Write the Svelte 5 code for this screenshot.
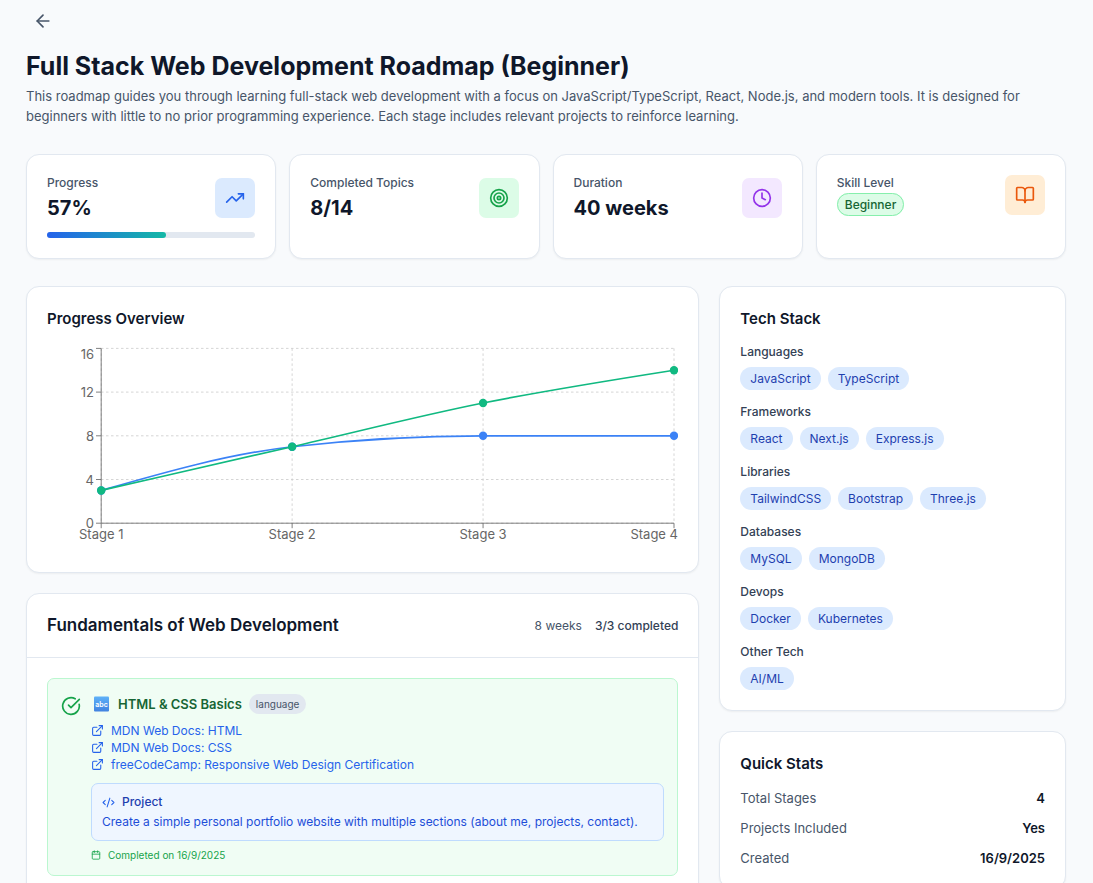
<script>
  const icons = {
    back: ['m12 19-7-7 7-7', 'M19 12H5'],
    trend: ['M16 7h6v6', 'm22 7-8.5 8.5-5-5L2 17'],
    target: [
      'M12 2a10 10 0 1 0 0 20a10 10 0 1 0 0-20',
      'M12 6a6 6 0 1 0 0 12a6 6 0 1 0 0-12',
      'M12 10a2 2 0 1 0 0 4a2 2 0 1 0 0-4'
    ],
    clock: ['M12 2a10 10 0 1 0 0 20a10 10 0 1 0 0-20', 'M12 6v6l4 2'],
    book: [
      'M12 7v14',
      'M3 18a1 1 0 0 1-1-1V4a1 1 0 0 1 1-1h5a4 4 0 0 1 4 4 4 4 0 0 1 4-4h5a1 1 0 0 1 1 1v13a1 1 0 0 1-1 1h-6a3 3 0 0 0-3 3 3 3 0 0 0-3-3z'
    ],
    check: ['M21.801 10A10 10 0 1 1 17 3.335', 'm9 11 3 3L22 4'],
    external: [
      'M15 3h6v6',
      'M10 14 21 3',
      'M18 13v6a2 2 0 0 1-2 2H5a2 2 0 0 1-2-2V8a2 2 0 0 1 2-2h6'
    ],
    code: ['m18 16 4-4-4-4', 'm6 8-4 4 4 4', 'm14.5 4-5 16'],
    calendar: [
      'M8 2v4',
      'M16 2v4',
      'M5 4h14a2 2 0 0 1 2 2v14a2 2 0 0 1-2 2H5a2 2 0 0 1-2-2V6a2 2 0 0 1 2-2z',
      'M3 10h18'
    ]
  };

  const stats = [
    { label: 'Progress', value: '57%', icon: 'trend', tone: 'blue', percent: 57 },
    { label: 'Completed Topics', value: '8/14', icon: 'target', tone: 'green' },
    { label: 'Duration', value: '40 weeks', icon: 'clock', tone: 'purple' },
    { label: 'Skill Level', badge: 'Beginner', icon: 'book', tone: 'orange' }
  ];

  const techStack = [
    { name: 'Languages', items: ['JavaScript', 'TypeScript'] },
    { name: 'Frameworks', items: ['React', 'Next.js', 'Express.js'] },
    { name: 'Libraries', items: ['TailwindCSS', 'Bootstrap', 'Three.js'] },
    { name: 'Databases', items: ['MySQL', 'MongoDB'] },
    { name: 'Devops', items: ['Docker', 'Kubernetes'] },
    { name: 'Other Tech', items: ['AI/ML'] }
  ];

  const quickStats = [
    ['Total Stages', '4'],
    ['Projects Included', 'Yes'],
    ['Created', '16/9/2025']
  ];

  const links = [
    'MDN Web Docs: HTML',
    'MDN Web Docs: CSS',
    'freeCodeCamp: Responsive Web Design Certification'
  ];

  // Chart geometry
  const stages = ['Stage 1', 'Stage 2', 'Stage 3', 'Stage 4'];
  const ticks = [0, 4, 8, 12, 16];
  const series = [
    { color: '#3b82f6', values: [3, 7, 8, 8] },
    { color: '#10b981', values: [3, 7, 11, 14] }
  ];
  const chartHeight = 209;
  const left = 54;
  const top = 5.4;
  const bottom = 180.2;

  let chartWidth = $state(631);
  let right = $derived(chartWidth - 4);
  const x = (i) => left + 0.2 + (i * (right - left - 0.2)) / (stages.length - 1);
  const y = (v) => bottom - (v * (bottom - top)) / 16;

  // Monotone cubic interpolation through evenly spaced points
  function curve(values) {
    const px = values.map((_, i) => x(i));
    const py = values.map(y);
    const n = px.length;
    const slope = (i) => (py[i + 1] - py[i]) / (px[i + 1] - px[i]);
    const m = [];
    for (let i = 1; i < n - 1; i++) {
      const a = slope(i - 1);
      const b = slope(i);
      m[i] = (Math.sign(a) + Math.sign(b)) * Math.min(Math.abs(a), Math.abs(b), 0.25 * Math.abs(a + b)) || 0;
    }
    m[0] = (3 * slope(0) - m[1]) / 2;
    m[n - 1] = (3 * slope(n - 2) - m[n - 2]) / 2;
    let d = `M${px[0]},${py[0]}`;
    for (let i = 0; i < n - 1; i++) {
      const h = (px[i + 1] - px[i]) / 3;
      d += `C${px[i] + h},${py[i] + h * m[i]},${px[i + 1] - h},${py[i + 1] - h * m[i + 1]},${px[i + 1]},${py[i + 1]}`;
    }
    return d;
  }
</script>

{#snippet icon(name, size)}
  <svg class="icon" width={size} height={size} viewBox="0 0 24 24" aria-hidden="true">
    {#each icons[name] as d}<path {d} />{/each}
  </svg>
{/snippet}

<main class="page">
  <button class="back" type="button" aria-label="Back">{@render icon('back', 20)}</button>

  <header class="intro">
    <h1>Full Stack Web Development Roadmap (Beginner)</h1>
    <p>
      This roadmap guides you through learning full-stack web development with a focus on
      JavaScript/TypeScript, React, Node.js, and modern tools. It is designed for beginners with
      little to no prior programming experience. Each stage includes relevant projects to reinforce
      learning.
    </p>
  </header>

  <section class="stats">
    {#each stats as stat}
      <article class="card padded">
        <div class="stat-row">
          <div>
            <p class="stat-label">{stat.label}</p>
            {#if stat.badge}
              <p class="badge-line"><span class="badge">{stat.badge}</span></p>
            {:else}
              <p class="stat-value">{stat.value}</p>
            {/if}
          </div>
          <span class="tile {stat.tone}">{@render icon(stat.icon, 20)}</span>
        </div>
        {#if stat.percent}
          <div class="track"><div class="fill" style="width: {stat.percent}%"></div></div>
        {/if}
      </article>
    {/each}
  </section>

  <div class="columns">
    <div class="column">
      <section class="card padded">
        <h2>Progress Overview</h2>
        <div class="chart" bind:clientWidth={chartWidth}>
          <svg width={chartWidth} height={chartHeight} role="img" aria-label="Progress Overview">
            <g class="grid">
              {#each ticks as t}<line x1={left} x2={right} y1={y(t)} y2={y(t)} />{/each}
              {#each stages as _, i}<line x1={x(i)} x2={x(i)} y1={top} y2={bottom} />{/each}
            </g>
            <g class="axis">
              <line x1={x(0)} x2={right} y1={bottom} y2={bottom} />
              <line x1={x(0)} x2={x(0)} y1={top} y2={bottom} />
              {#each ticks as t}<line x1={left - 5} x2={left} y1={y(t)} y2={y(t)} />{/each}
              {#each stages as _, i}<line x1={x(i)} x2={x(i)} y1={bottom} y2={bottom + 5} />{/each}
            </g>
            <g class="labels">
              {#each ticks as t}
                <text x={left - 7} y={t === 16 ? 16 : y(t) + 5} text-anchor="end">{t}</text>
              {/each}
              {#each stages as stage, i}
                {@const last = i === stages.length - 1}
                <text x={last ? chartWidth : x(i)} y="196" text-anchor={last ? 'end' : 'middle'}>{stage}</text>
              {/each}
            </g>
            {#each series as s}
              <path class="line" d={curve(s.values)} stroke={s.color} />
              {#each s.values as v, i}<circle cx={x(i)} cy={y(v)} r="4.2" fill={s.color} />{/each}
            {/each}
          </svg>
        </div>
      </section>

      <section class="card">
        <header class="stage-head">
          <h3>Fundamentals of Web Development</h3>
          <div class="stage-meta">
            <span>8 weeks</span>
            <strong>3/3 completed</strong>
          </div>
        </header>
        <div class="stage-body">
          <article class="topic">
            <span class="done">{@render icon('check', 20)}</span>
            <div class="topic-main">
              <div class="topic-title">
                <svg class="abc" width="20" height="16" viewBox="0 0 20 16" aria-hidden="true">
                  <defs>
                    <linearGradient id="abc-fill" x1="0" y1="0" x2="0" y2="1">
                      <stop offset="0" stop-color="#5eb1f8" />
                      <stop offset="1" stop-color="#4182e0" />
                    </linearGradient>
                  </defs>
                  <rect x="3" y="0.5" width="15" height="15" rx="1" fill="url(#abc-fill)" />
                  <text x="10.5" y="10.5" text-anchor="middle">abc</text>
                </svg>
                <h4>HTML &amp; CSS Basics</h4>
                <span class="tag">language</span>
              </div>
              <ul class="links">
                {#each links as link}
                  <li><a href="#resource">{@render icon('external', 13)}{link}</a></li>
                {/each}
              </ul>
              <div class="project">
                <h5>{@render icon('code', 13)}Project</h5>
                <p>Create a simple personal portfolio website with multiple sections (about me, projects, contact).</p>
              </div>
              <p class="completed">{@render icon('calendar', 10)}Completed on 16/9/2025</p>
            </div>
          </article>
        </div>
      </section>
    </div>

    <aside class="column">
      <section class="card padded">
        <h2>Tech Stack</h2>
        <div class="groups">
          {#each techStack as group}
            <div>
              <h6>{group.name}</h6>
              <div class="chips">
                {#each group.items as item}<span class="chip">{item}</span>{/each}
              </div>
            </div>
          {/each}
        </div>
      </section>

      <section class="card padded">
        <h2>Quick Stats</h2>
        <dl>
          {#each quickStats as [name, value]}
            <div><dt>{name}</dt><dd>{value}</dd></div>
          {/each}
        </dl>
      </section>
    </aside>
  </div>
</main>

<style>
  :global(body) {
    background: #f8fafc;
  }

  :global(:where(#app *)) {
    box-sizing: border-box;
    margin: 0;
  }

  .page {
    min-height: 100vh;
    padding: 4px 27px 20px 26px;
    font-family: Inter, 'Liberation Sans', sans-serif;
    font-size: 12px;
    color: #0f172a;
  }

  .icon {
    display: block;
    flex: none;
    fill: none;
    stroke: currentColor;
    stroke-width: 2;
    stroke-linecap: round;
    stroke-linejoin: round;
  }

  .back {
    display: block;
    padding: 7px;
    border: 0;
    border-radius: 7px;
    background: none;
    color: #475569;
    cursor: pointer;
  }

  .intro {
    margin: 13px 0 28px;
  }

  h1 {
    margin-bottom: 5px;
    font-size: 25px;
    line-height: 30px;
    font-weight: 700;
  }

  .intro p {
    font-size: 13px;
    line-height: 20px;
    color: #475569;
  }

  .card {
    border: 1px solid #e2e8f0;
    border-radius: 13px;
    background: #fff;
    box-shadow: 0 1px 2px rgb(0 0 0 / 0.05);
  }

  .padded {
    padding: 20px;
  }

  .stats {
    display: grid;
    grid-template-columns: repeat(4, minmax(0, 1fr));
    gap: 13px;
    margin-bottom: 27px;
  }

  .stat-row {
    display: flex;
    align-items: center;
    justify-content: space-between;
  }

  .stat-label {
    margin-bottom: 4px;
    line-height: 16px;
    font-weight: 500;
    color: #475569;
  }

  .stat-value {
    font-size: 20px;
    line-height: 26px;
    font-weight: 700;
  }

  .badge-line {
    line-height: 20px;
  }

  .badge {
    padding: 3px 7px;
    border: 1px solid #86efac;
    border-radius: 20px;
    background: #dcfce7;
    font-weight: 500;
    color: #166534;
  }

  .tile {
    padding: 10px;
    border-radius: 7px;
  }

  .blue {
    background: #dbeafe;
    color: #2563eb;
  }

  .green {
    background: #dcfce7;
    color: #16a34a;
  }

  .purple {
    background: #f3e8ff;
    color: #9333ea;
  }

  .orange {
    background: #ffedd5;
    color: #ea580c;
  }

  .track {
    height: 6px;
    margin-top: 11px;
    border-radius: 3px;
    background: #e2e8f0;
  }

  .fill {
    height: 100%;
    border-radius: 3px;
    background: linear-gradient(to right, #2563eb, #14b8a6);
  }

  .columns {
    display: grid;
    grid-template-columns: minmax(0, 1fr) 33.333%;
    align-items: start;
    gap: 20px;
  }

  .column {
    display: grid;
    gap: 20px;
  }

  h2 {
    margin-bottom: 13px;
    font-size: 15px;
    line-height: 23px;
    font-weight: 600;
  }

  .chart {
    overflow: hidden;
  }

  .chart svg {
    display: block;
  }

  .grid line {
    stroke: #ccc;
    stroke-width: 0.83;
    stroke-dasharray: 2.5 2.5;
  }

  .axis line {
    stroke: #666;
    stroke-width: 0.83;
  }

  .labels text {
    font-size: 13px;
    fill: #666;
  }

  .line {
    fill: none;
    stroke-width: 1.7;
  }

  .stage-head {
    display: flex;
    align-items: center;
    justify-content: space-between;
    padding: 20px;
    border-bottom: 1px solid #e2e8f0;
  }

  h3 {
    font-size: 17px;
    line-height: 23px;
    font-weight: 600;
  }

  .stage-meta {
    display: flex;
    gap: 13px;
    color: #475569;
  }

  .stage-meta strong {
    font-weight: 500;
    color: #334155;
  }

  .stage-body {
    padding: 20px;
  }

  .topic {
    display: flex;
    gap: 10px;
    padding: 13px;
    border: 1px solid #bbf7d0;
    border-radius: 7px;
    background: #f0fdf4;
  }

  .done {
    padding-top: 4px;
    color: #16a34a;
  }

  .topic-main {
    flex: 1;
    min-width: 0;
  }

  .topic-title {
    display: flex;
    align-items: center;
    gap: 7px;
    min-height: 24px;
    margin-bottom: 6px;
  }

  .abc text {
    font-size: 7px;
    font-weight: 600;
    fill: #fff;
  }

  h4 {
    font-size: 13px;
    line-height: 20px;
    font-weight: 600;
    color: #166534;
  }

  .tag {
    padding: 0 7px;
    border-radius: 10px;
    background: #e2e8f0;
    font-size: 10px;
    line-height: 20px;
    color: #475569;
  }

  .links {
    padding: 0;
    list-style: none;
    line-height: 17px;
  }

  .links a {
    display: flex;
    align-items: center;
    gap: 7px;
    color: #2563eb;
    text-decoration: none;
  }

  .project {
    margin-top: 10px;
    padding: 10px;
    border: 1px solid #bfdbfe;
    border-radius: 7px;
    background: #eff6ff;
    line-height: 17px;
    color: #1d4ed8;
  }

  h5 {
    display: flex;
    align-items: center;
    gap: 7px;
    margin-bottom: 3px;
    font-size: 12px;
    line-height: 16px;
    font-weight: 500;
    color: #1e40af;
  }

  h5 .icon {
    color: #2563eb;
  }

  .completed {
    display: flex;
    align-items: center;
    gap: 7px;
    margin-top: 7px;
    font-size: 10px;
    line-height: 14px;
    color: #16a34a;
  }

  .groups {
    display: grid;
    gap: 13px;
  }

  h6 {
    margin-bottom: 7px;
    font-size: 12px;
    line-height: 17px;
    font-weight: 500;
    color: #334155;
  }

  .chips {
    display: flex;
    flex-wrap: wrap;
    gap: 7px;
  }

  .chip {
    padding: 0 10px;
    border-radius: 12px;
    background: #dbeafe;
    line-height: 23px;
    color: #1e40af;
  }

  dl {
    display: grid;
    gap: 10px;
    font-size: 13px;
    line-height: 20px;
  }

  dl div {
    display: flex;
    justify-content: space-between;
  }

  dt {
    color: #475569;
  }

  dd {
    font-weight: 600;
  }
</style>
